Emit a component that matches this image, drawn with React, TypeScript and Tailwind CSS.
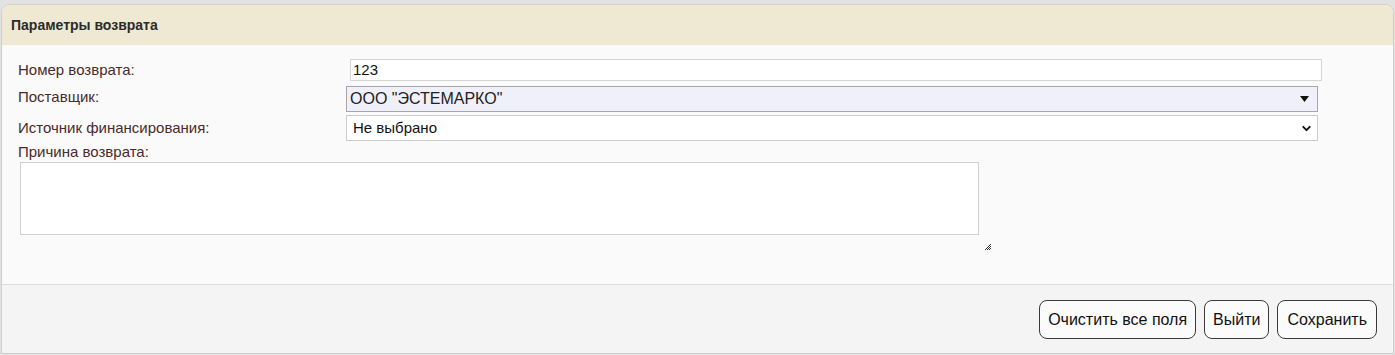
import { ChevronDown } from 'lucide-react';

// ─── Параметры возврата ───────────────────────────────────────────────────────
export default function App() {
  return (
    <div className="w-[1395px] h-[355px] bg-[#e2e2e2] pt-[4px] pl-[1px] pr-[1px] font-['Liberation_Sans',Arial,sans-serif]">
      <div className="h-[350px] flex flex-col border border-[#cfcfcf] rounded-t-[8px] overflow-hidden bg-[#fafafa]">

        {/* ── Шапка ── */}
        <div className="h-[40px] shrink-0 bg-[#efe8d3] flex items-center pl-[9px]">
          <span className="text-[14px] font-bold text-[#2b2b2b]">Параметры возврата</span>
        </div>

        {/* ── Поля ── */}
        <div className="flex-1 pt-[14px] pl-[16px] text-[15px] text-[#4a2a2a]">
          <div className="flex items-center h-[22px]">
            <label className="w-[332px]">Номер возврата:</label>
            <div className="w-[972px] h-[22px] bg-white border border-[#d4d4d4] flex items-center pl-[2px] text-[15px] text-[#111]">
              123
            </div>
          </div>

          <div className="flex items-center h-[26px] mt-[5px]">
            <label className="w-[328px] -mt-[4px]">Поставщик:</label>
            <div className="w-[972px] h-[26px] bg-[#f0f0fa] border border-[#a6a6a6] flex items-center justify-between pl-[3px] pr-[8px] text-[16px] text-[#222]">
              <span>ООО "ЭСТЕМАРКО"</span>
              <svg width="9" height="6" viewBox="0 0 9 6"><path d="M0 0h9L4.5 6z" fill="#111" /></svg>
            </div>
          </div>

          <div className="flex items-center h-[26px] mt-[3px]">
            <label className="w-[328px]">Источник финансирования:</label>
            <div className="w-[972px] h-[26px] bg-white border border-[#cccccc] flex items-center justify-between pl-[6px] pr-[4px] text-[15px] text-[#111]">
              <span>Не выбрано</span>
              <ChevronDown className="w-[13px] h-[13px]" strokeWidth={3.5} />
            </div>
          </div>

          <div className="mt-[2px] leading-[18px]">Причина возврата:</div>
          <div className="flex items-end mt-[1px]">
            <textarea className="w-[959px] h-[73px] bg-white border border-[#d0d0d0] ml-[2px] resize-none outline-none" />
            <svg className="ml-[6px] mb-[-16px]" width="7" height="7" viewBox="0 0 7 7">
              <path d="M6 0L0 6M6 2L2 6M6 4L4 6" stroke="#333" strokeWidth="1" />
            </svg>
          </div>
        </div>

        {/* ── Кнопки ── */}
        <div className="h-[69px] shrink-0 bg-[#f4f4f4] border-t border-[#dcdcdc] flex justify-end items-start pt-[15px] pr-[16px] gap-[8px]">
          <button className="h-[39px] px-[8px] rounded-[8px] border border-[#3a3a3a] bg-[#fbfbfb] text-[16px] text-[#111]">
            Очистить все поля
          </button>
          <button className="h-[39px] px-[8px] rounded-[8px] border border-[#3a3a3a] bg-[#fbfbfb] text-[16px] text-[#111]">
            Выйти
          </button>
          <button className="h-[39px] px-[9px] rounded-[8px] border border-[#3a3a3a] bg-[#fbfbfb] text-[16px] text-[#111]">
            Сохранить
          </button>
        </div>
      </div>
    </div>
  );
}
